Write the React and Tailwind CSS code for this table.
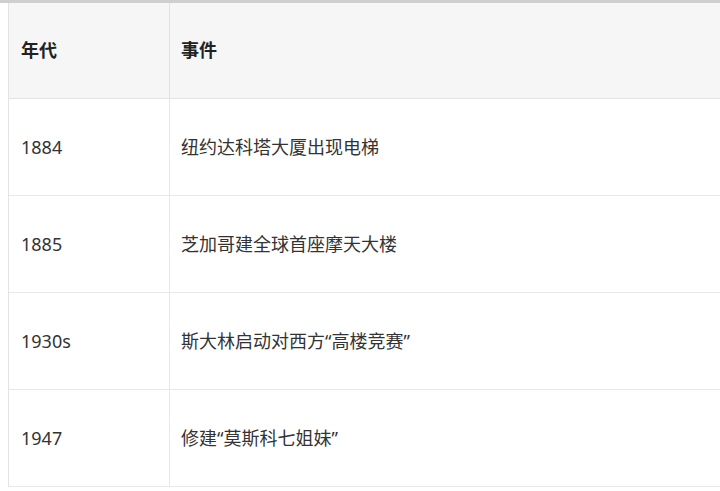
export default function App() {
  const rows = [
    ["1884", "纽约达科塔大厦出现电梯"],
    ["1885", "芝加哥建全球首座摩天大楼"],
    ["1930s", "斯大林启动对西方“高楼竞赛”"],
    ["1947", "修建“莫斯科七姐妹”"],
  ];
  return (
    <div className="w-[720px] h-[491px] bg-white overflow-hidden" style={{ fontFamily: '"Noto Sans", "Noto Sans CJK SC", sans-serif' }}>
      <div className="h-[3px] bg-[#cfcfcf]" />
      <div className="ml-[8px] border-l border-[#e3e3e3] text-[18px] text-[#333]">
        <div className="grid grid-cols-[161px_1fr] h-[96px] bg-[#f6f6f6] border-b border-[#e3e3e3] font-bold text-[#222]">
          <div className="flex items-center pl-[12px] border-r border-[#e3e3e3]">年代</div>
          <div className="flex items-center pl-[11px]">事件</div>
        </div>
        {rows.map(([y, e]) => (
          <div key={y} className="grid grid-cols-[161px_1fr] h-[97px] border-b border-[#e8e8e8]">
            <div className="flex items-center pl-[12px] border-r border-[#e8e8e8]">{y}</div>
            <div className="flex items-center pl-[11px]">{e}</div>
          </div>
        ))}
      </div>
    </div>
  );
}
